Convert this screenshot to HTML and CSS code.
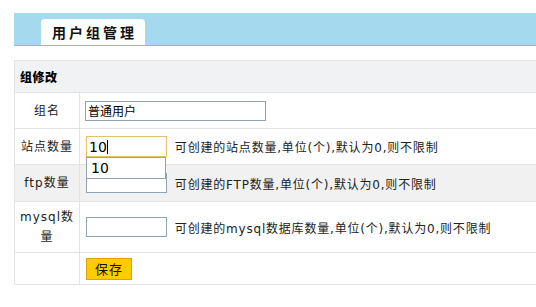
FILE: index.html
```html
<!DOCTYPE html>
<html lang="zh-CN">
<head>
    <meta charset="UTF-8">
    <title>用户组管理</title>
    <link rel="stylesheet" href="styles.css">
</head>
<body>
    <div class="page">
        <div class="title-bar">
            <div class="tab">用户组管理</div>
        </div>

        <table class="form-table">
            <tr class="head-row">
                <th colspan="2">组修改</th>
            </tr>
            <tr class="row-name">
                <td class="label">组名</td>
                <td><input type="text" class="text-input wide" value="普通用户"></td>
            </tr>
            <tr class="row-site">
                <td class="label">站点数量</td>
                <td>
                    <span class="field">
                        <input type="text" class="text-input small focused" value="10">
                        <span class="caret"></span>
                        <span class="suggest">10</span>
                    </span>
                    <span class="hint">可创建的站点数量,单位(个),默认为0,则不限制</span>
                </td>
            </tr>
            <tr class="row-ftp alt">
                <td class="label">ftp数量</td>
                <td>
                    <input type="text" class="text-input small">
                    <span class="hint">可创建的FTP数量,单位(个),默认为0,则不限制</span>
                </td>
            </tr>
            <tr class="row-mysql">
                <td class="label">mysql数量</td>
                <td>
                    <input type="text" class="text-input small">
                    <span class="hint">可创建的mysql数据库数量,单位(个),默认为0,则不限制</span>
                </td>
            </tr>
            <tr class="row-save">
                <td class="label"></td>
                <td><button class="btn-save">保存</button></td>
            </tr>
        </table>
    </div>
</body>
</html>
```

FILE: styles.css
```css
* {
    margin: 0;
    padding: 0;
    box-sizing: border-box;
}

body {
    font-family: "DejaVu Sans", "Noto Sans CJK SC", sans-serif;
    font-size: 12px;
    color: #222;
    background: #fff;
    overflow: hidden;
}

.page {
    padding: 13px 0 0 14px;
}

.title-bar {
    height: 33px;
    background: #a5d9ee;
    border-bottom: 1px solid #7cc1de;
    padding: 6px 0 0 27px;
}

.tab {
    width: 104px;
    height: 26px;
    background: #fff;
    border-radius: 4px 4px 0 0;
    font-family: "Noto Sans CJK SC", sans-serif;
    font-size: 14px;
    font-weight: bold;
    letter-spacing: 3px;
    line-height: 26px;
    padding-left: 11px;
    color: #111;
}

.form-table {
    margin-top: 14px;
    width: 523px;
    border-collapse: collapse;
}

.form-table th,
.form-table td {
    border: 1px solid #e3e3e5;
    vertical-align: middle;
}

.form-table th {
    height: 32px;
    background: #f1f2f4;
    text-align: left;
    padding-left: 5px;
    font-family: "Noto Sans CJK SC", sans-serif;
    font-size: 12px;
    font-weight: 900;
    letter-spacing: 0.5px;
    color: #000;
}

.form-table td {
    padding: 0 6px;
}

.form-table td.label {
    width: 65px;
    text-align: center;
    padding: 0 5px;
    line-height: 20px;
    letter-spacing: 1px;
}

.row-name td { height: 36px; }
.row-site td { height: 36px; }
.row-ftp td { height: 37px; }
.row-mysql td { height: 51px; }
.row-save td { height: 32px; }

.alt td {
    background: #f1f1f1;
}

.text-input {
    height: 20px;
    border: 1px solid #8fa3b5;
    background: #fff;
    font-family: "DejaVu Sans", "Noto Sans CJK SC", sans-serif;
    font-size: 12px;
    padding: 0 2px;
    vertical-align: middle;
    outline: none;
    color: #000;
}

.text-input.wide {
    width: 181px;
    margin-left: -1px;
}

.text-input.small {
    width: 81px;
}

.text-input.focused {
    height: 21px;
    border-color: #e2c26c;
    font-size: 14px;
}

.field {
    position: relative;
    display: inline-block;
    vertical-align: middle;
}

.caret {
    position: absolute;
    left: 21px;
    top: 4px;
    width: 1px;
    height: 14px;
    background: #000;
}

.suggest {
    position: absolute;
    left: 0;
    top: 21px;
    width: 80px;
    height: 22px;
    background: #fff;
    border: 1px solid #8fa3b5;
    font-size: 14px;
    line-height: 20px;
    padding-left: 4px;
    color: #000;
    z-index: 2;
}

.hint {
    margin-left: 4px;
    vertical-align: middle;
    letter-spacing: 0.8px;
}

.btn-save {
    width: 46px;
    height: 22px;
    background: #ffcc00;
    border: 1px solid #e5a100;
    font-family: "Noto Sans CJK SC", sans-serif;
    font-size: 13px;
    color: #111;
    letter-spacing: 1px;
}
```
